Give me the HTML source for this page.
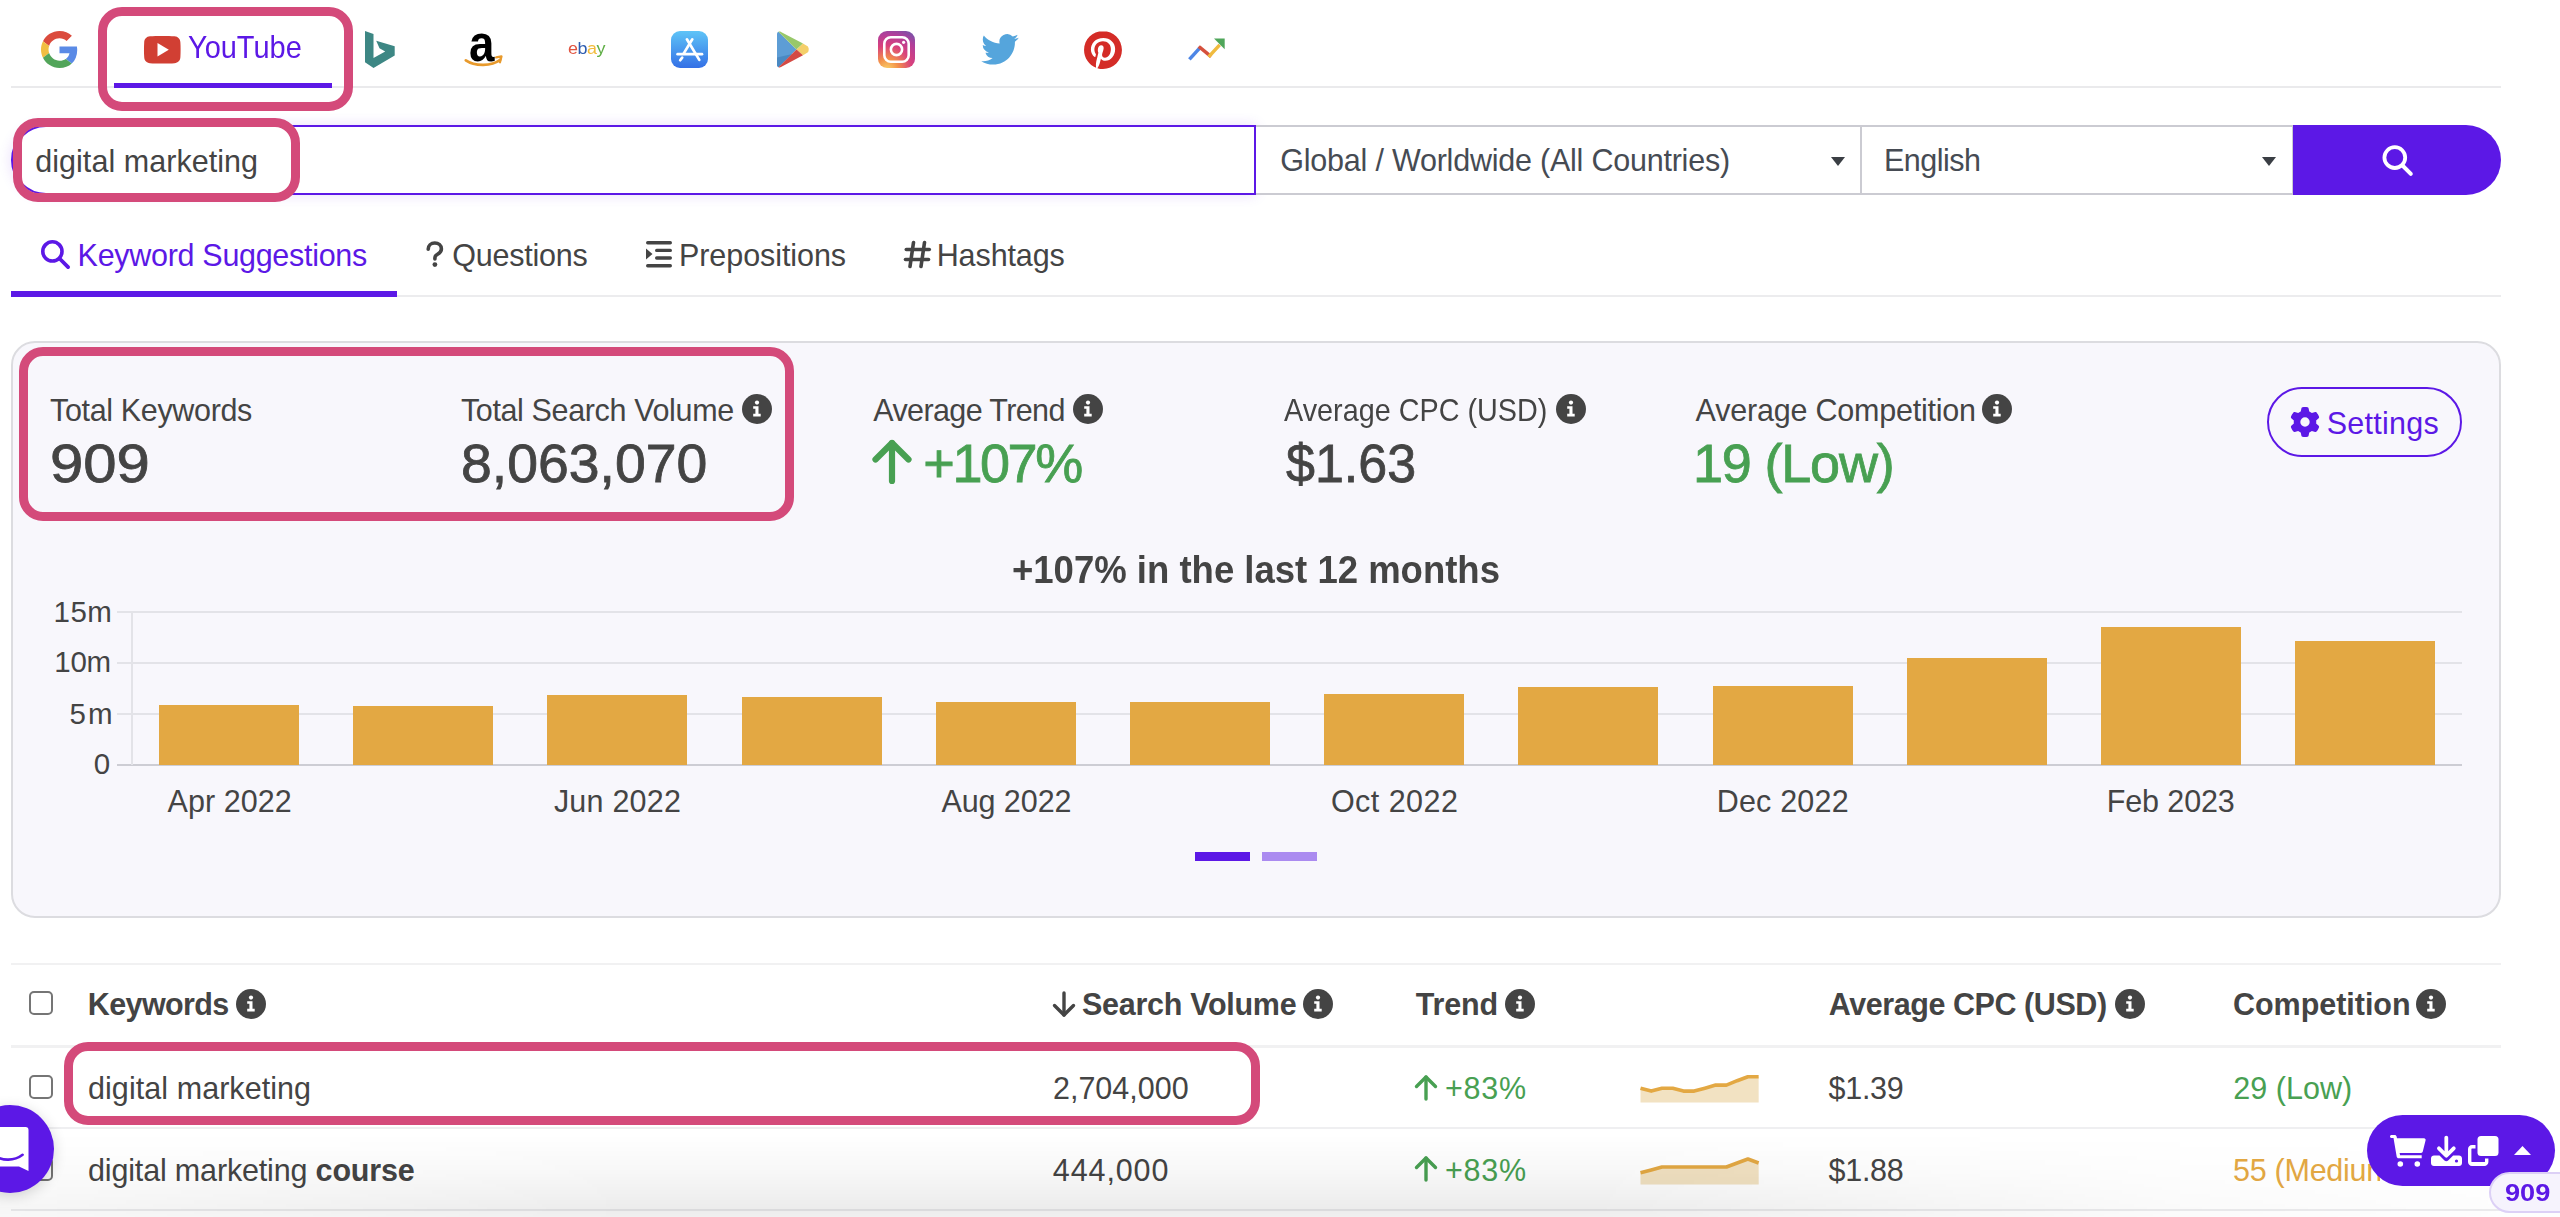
<!DOCTYPE html>
<html><head><meta charset="utf-8"><style>
html,body{margin:0;padding:0;width:2560px;height:1217px;overflow:hidden;background:#fff}
body{position:relative;font-family:"Liberation Sans",sans-serif;}
.a{position:absolute}
.t{position:absolute;white-space:nowrap;line-height:1}
svg.a{overflow:visible}
</style></head><body>
<svg class="a" style="left:41px;top:31px;" width="37" height="37" viewBox="0 0 48 48"><path fill="#db4b3d" d="M24 9.5c3.54 0 6.71 1.22 9.21 3.6l6.85-6.85C35.9 2.38 30.47 0 24 0 14.62 0 6.51 5.38 2.56 13.22l7.98 6.19C12.43 13.72 17.74 9.5 24 9.5z"/><path fill="#5a8ae6" d="M46.98 24.55c0-1.57-.15-3.09-.38-4.55H24v9.02h12.94c-.58 2.96-2.26 5.48-4.78 7.18l7.73 6c4.51-4.18 7.09-10.36 7.09-17.65z"/><path fill="#f1be42" d="M10.53 28.59c-.48-1.45-.76-2.99-.76-4.59s.27-3.14.76-4.59l-7.98-6.19C.92 16.46 0 20.12 0 24c0 3.88.92 7.54 2.56 10.78l7.97-6.19z"/><path fill="#52a55a" d="M24 48c6.48 0 11.93-2.13 15.89-5.81l-7.73-6c-2.15 1.45-4.92 2.3-8.16 2.3-6.26 0-11.57-4.22-13.47-9.91l-7.98 6.19C6.51 42.62 14.62 48 24 48z"/></svg>
<svg class="a" style="left:144px;top:36px;" width="37" height="28" viewBox="0 0 37 28"><path d="M6 0.3C12 -0.1 24.5 -0.1 30.5 0.3C34 0.6 36.3 3 36.4 6.5C36.7 11 36.7 16.6 36.4 21.1C36.3 24.6 34 27 30.5 27.3C24.5 27.7 12 27.7 6 27.3C2.5 27 0.3 24.6 0.2 21.1C-0.1 16.6 -0.1 11 0.2 6.5C0.3 3 2.5 0.6 6 0.3Z" fill="#d13f33"/><path d="M13.5 6.9L24.8 13.7 13.5 20.5z" fill="#fff"/></svg>
<div class="t " style="left:188.05px;top:31.68px;font-size:30.5px;color:#5c18e6;font-weight:400;letter-spacing:0.000px;transform:scaleX(0.9492);transform-origin:0 0;">YouTube</div>
<div class="a" style="left:114px;top:83px;width:218px;height:5px;background:#5c18e6"></div>
<div class="a" style="left:11px;top:86px;width:2490px;height:2px;background:#eaeaec"></div>
<div class="a" style="left:114px;top:83px;width:218px;height:5px;background:#5c18e6"></div>
<svg class="a" style="left:365px;top:31px;" width="31" height="37" viewBox="0 0 31 37"><path fill="#3d8784" d="M0 0L8.5 3V26.9L20.2 20.5L14.5 17.2L11.2 9.8L29.7 15.2V24.6L8.5 37L0 31.2Z"/></svg>
<div class="t" style="left:468.5px;top:16.9px;font-size:52px;font-weight:700;color:#000;line-height:52px;transform:scaleX(0.88);transform-origin:0 0">a</div>
<svg class="a" style="left:464px;top:53px;" width="41" height="16" viewBox="0 0 41 16"><path d="M1.8 7.3C10 12.8 27 14 36.2 6.8" stroke="#e89a2c" stroke-width="2.7" fill="none" stroke-linecap="round"/><path d="M32.2 4.4L37.4 3.4L35.9 9.2" stroke="#e89a2c" stroke-width="2.4" fill="none" stroke-linecap="round" stroke-linejoin="round"/></svg>
<div class="t" style="left:567.5px;top:40.5px;font-size:16px;line-height:16px;letter-spacing:-0.4px;font-weight:400;transform:scaleX(1.12);transform-origin:0 0"><span style="color:#e0533f">e</span><span style="color:#2e5db0">b</span><span style="color:#f2bb3a">a</span><span style="color:#5fae45">y</span></div>
<svg class="a" style="left:671px;top:31px;" width="37" height="37" viewBox="0 0 37 37"><defs><linearGradient id="ga" x1="0" y1="0" x2="0" y2="1"><stop offset="0" stop-color="#5ec4f7"/><stop offset="1" stop-color="#3470e6"/></linearGradient></defs><rect width="37" height="37" rx="9" fill="url(#ga)"/><g stroke="#fff" stroke-width="2.7" stroke-linecap="round" fill="none"><path d="M15.9 8.3L28.3 28.9"/><path d="M21.3 8.3L12.6 22.6"/><path d="M6.6 23.2H31"/><path d="M11.2 26.6L9.2 29.2"/></g></svg>
<svg class="a" style="left:777px;top:31px;" width="32" height="37" viewBox="0 0 32 37"><path d="M1.5 0.8C0.6 1.2 0 2 0 3V34C0 35 .6 35.8 1.5 36.2L19.5 18.5Z" fill="#5d9dd5"/><path d="M0 26.5L15.3 23L1.5 36.2C.6 35.8 0 35 0 34Z" fill="#4a89c2"/><path d="M1.5 0.8C2.3 .4 3.2 .4 4 .9L26 12.6L19.5 18.5Z" fill="#98c86a"/><path d="M19.5 18.5L26 12.6L30.2 15C32.2 16.2 32.2 20.6 30.2 21.8L26 24.3Z" fill="#f4cf6a"/><path d="M1.5 36.2L19.5 18.5L26 24.3L4 36.1C3.2 36.6 2.3 36.6 1.5 36.2Z" fill="#d44a44"/></svg>
<svg class="a" style="left:878px;top:31px;" width="37" height="37" viewBox="0 0 37 37"><defs><radialGradient id="gi" cx="0.25" cy="1.05" r="1.2"><stop offset="0" stop-color="#f9d36a"/><stop offset="0.25" stop-color="#f3914a"/><stop offset="0.55" stop-color="#d9417c"/><stop offset="0.8" stop-color="#b33e9a"/><stop offset="1" stop-color="#7a52a8"/></radialGradient></defs><rect width="37" height="37" rx="9" fill="url(#gi)"/><rect x="6.3" y="6.3" width="24.4" height="24.4" rx="6.5" fill="none" stroke="#fff" stroke-width="2.6"/><circle cx="18.5" cy="18.5" r="5.6" fill="none" stroke="#fff" stroke-width="2.6"/><circle cx="25.6" cy="11.3" r="1.6" fill="#fff"/></svg>
<svg class="a" style="left:981px;top:33px;" width="38" height="32" viewBox="0 1.5 24 20.5"><path fill="#55a5dc" d="M23.953 4.57a10 10 0 01-2.825.775 4.958 4.958 0 002.163-2.723c-.951.555-2.005.959-3.127 1.184a4.92 4.92 0 00-8.384 4.482C7.69 8.095 4.067 6.13 1.64 3.162a4.822 4.822 0 00-.666 2.475c0 1.71.87 3.213 2.188 4.096a4.904 4.904 0 01-2.228-.616v.06a4.923 4.923 0 003.946 4.827 4.996 4.996 0 01-2.212.085 4.936 4.936 0 004.604 3.417 9.867 9.867 0 01-6.102 2.105c-.39 0-.779-.023-1.17-.067a13.995 13.995 0 007.557 2.209c9.053 0 13.998-7.496 13.998-13.985 0-.21 0-.42-.015-.63A9.935 9.935 0 0024 4.59z"/></svg>
<svg class="a" style="left:1084px;top:31px;" width="38" height="38" viewBox="0 0 24 24"><circle cx="12" cy="12" r="12" fill="#fff"/><path fill="#d42c27" d="M12.017 0C5.396 0 .029 5.367.029 11.987c0 5.079 3.158 9.417 7.618 11.162-.105-.949-.199-2.403.041-3.439.219-.937 1.406-5.957 1.406-5.957s-.359-.72-.359-1.781c0-1.663.967-2.911 2.168-2.911 1.024 0 1.518.769 1.518 1.688 0 1.029-.653 2.567-.992 3.992-.285 1.193.6 2.165 1.775 2.165 2.128 0 3.768-2.245 3.768-5.487 0-2.861-2.063-4.869-5.008-4.869-3.41 0-5.409 2.562-5.409 5.199 0 1.033.394 2.143.889 2.741.099.12.112.225.085.345-.09.375-.293 1.199-.334 1.363-.053.225-.172.271-.401.165-1.495-.69-2.433-2.878-2.433-4.646 0-3.776 2.748-7.252 7.92-7.252 4.158 0 7.392 2.967 7.392 6.923 0 4.135-2.607 7.462-6.233 7.462-1.214 0-2.354-.629-2.758-1.379l-.749 2.848c-.269 1.045-1.004 2.352-1.498 3.146 1.123.345 2.306.535 3.55.535 6.607 0 11.985-5.365 11.985-11.987C23.97 5.39 18.592.026 11.985.026L12.017 0z"/></svg>
<svg class="a" style="left:1187px;top:38px;" width="39" height="23" viewBox="0 0 39 23"><g stroke-width="3.5" fill="none"><path d="M2.4 21.4L13.1 9.6" stroke="#4d86e6"/><path d="M13.1 9.6L22.8 17.6" stroke="#d5503c" stroke-linecap="square"/><path d="M22.8 17.6L31.5 8.2" stroke="#f0bb3f" stroke-linecap="square"/></g><path d="M27 0.4H37.7V11.2z" fill="#4fa65a"/></svg>
<div class="a" style="left:11px;top:125px;width:1245px;height:70px;border:2px solid #5c18e6;border-right-width:2px;border-radius:35px 0 0 35px;background:#fff;box-sizing:border-box;box-shadow:0 0 14px rgba(92,24,230,.14)"></div>
<div class="t " style="left:35.20px;top:145.68px;font-size:30.5px;color:#444444;font-weight:400;letter-spacing:0.050px;">digital marketing</div>
<div class="a" style="left:1256px;top:125px;width:606px;height:70px;border:2px solid #cbcbd2;border-left:none;box-sizing:border-box;background:#fff"></div>
<div class="a" style="left:1860px;top:125px;width:434px;height:70px;border:2px solid #cbcbd2;box-sizing:border-box;background:#fff"></div>
<div class="t " style="left:1280.30px;top:145.48px;font-size:30.5px;color:#464b53;font-weight:400;letter-spacing:-0.221px;">Global / Worldwide (All Countries)</div>
<div class="t " style="left:1884.00px;top:145.48px;font-size:30.5px;color:#464b53;font-weight:400;letter-spacing:-0.500px;">English</div>
<svg class="a" style="left:1831px;top:157px;" width="14" height="9" viewBox="0 0 14 9"><path d="M0 0h14L7 9z" fill="#3a3e44"/></svg>
<svg class="a" style="left:2262px;top:157px;" width="14" height="9" viewBox="0 0 14 9"><path d="M0 0h14L7 9z" fill="#3a3e44"/></svg>
<div class="a" style="left:2293px;top:125px;width:208px;height:70px;background:#5c18e6;border-radius:0 35px 35px 0"></div>
<svg class="a" style="left:2380px;top:143px;" width="34" height="34" viewBox="0 0 34 34"><circle cx="14.8" cy="14.6" r="10.4" stroke="#fff" stroke-width="3.8" fill="none"/><path d="M22.5 22.5l8.3 8.3" stroke="#fff" stroke-width="4" stroke-linecap="round"/></svg>
<svg class="a" style="left:40px;top:239px;" width="31" height="31" viewBox="0 0 31 31"><circle cx="12.4" cy="12.4" r="9.6" stroke="#5c18e6" stroke-width="3.6" fill="none"/><path d="M19.5 19.5l8.6 8.6" stroke="#5c18e6" stroke-width="3.8" stroke-linecap="round"/></svg>
<div class="t " style="left:77.60px;top:239.78px;font-size:30.5px;color:#5c18e6;font-weight:400;letter-spacing:-0.300px;">Keyword Suggestions</div>
<svg class="a" style="left:425px;top:241px;" width="20" height="27" viewBox="0 0 20 27"><path d="M3.2 8.2C3.2 4.6 6 2 9.8 2c3.7 0 6.6 2.5 6.6 6 0 3.3-2.6 4.6-4.6 5.8-1.4.8-1.9 1.7-1.9 3.2v.9" stroke="#444" stroke-width="3.6" fill="none" stroke-linecap="round"/><circle cx="9.9" cy="23.6" r="2.4" fill="#444"/></svg>
<div class="t " style="left:452.30px;top:239.78px;font-size:30.5px;color:#444444;font-weight:400;letter-spacing:-0.225px;">Questions</div>
<svg class="a" style="left:646px;top:241px;" width="27" height="27" viewBox="0 0 27 27"><g fill="#444"><rect x="0" y="0" width="26" height="3.4" rx="1.7"/><rect x="9" y="7.7" width="17" height="3.4" rx="1.7"/><rect x="9" y="15.3" width="17" height="3.4" rx="1.7"/><rect x="0" y="23" width="26" height="3.4" rx="1.7"/><path d="M0 7.5l6.5 5.5L0 18.5z"/></g></svg>
<div class="t " style="left:679.00px;top:239.78px;font-size:30.5px;color:#444444;font-weight:400;letter-spacing:-0.073px;">Prepositions</div>
<svg class="a" style="left:904px;top:241px;" width="27" height="27" viewBox="0 0 27 27"><g stroke="#444" stroke-width="3.6" stroke-linecap="round"><path d="M9.5 1.5l-3.5 24"/><path d="M20.5 1.5l-3.5 24"/><path d="M2.3 8.5h23"/><path d="M1.5 18.5h23"/></g></svg>
<div class="t " style="left:936.70px;top:239.78px;font-size:30.5px;color:#444444;font-weight:400;letter-spacing:-0.100px;">Hashtags</div>
<div class="a" style="left:11px;top:295px;width:2490px;height:2px;background:#ececee"></div>
<div class="a" style="left:11px;top:291px;width:386px;height:6px;background:#5c18e6"></div>
<div class="a" style="left:11px;top:341px;width:2490px;height:577px;background:#f8f7fc;border:2px solid #dcdce0;border-radius:24px;box-sizing:border-box"></div>
<div class="t " style="left:50.00px;top:394.58px;font-size:30.5px;color:#444444;font-weight:400;letter-spacing:-0.346px;">Total Keywords</div>
<div class="t " style="left:50.08px;top:435.79px;font-size:54px;color:#444444;font-weight:400;letter-spacing:0.000px;transform:scaleX(1.1081);transform-origin:0 0;-webkit-text-stroke:0.8px currentColor;">909</div>
<div class="t " style="left:460.90px;top:394.58px;font-size:30.5px;color:#444444;font-weight:400;letter-spacing:-0.361px;">Total Search Volume</div>
<svg class="a" style="left:742px;top:394px;" width="30" height="30" viewBox="0 0 30 30"><circle cx="15" cy="15" r="15" fill="#444"/><circle cx="15" cy="8.6" r="2.1" fill="#fff"/><path d="M11.2 12.2h5.3v7.6h2.2v2.6h-7.5v-2.6h2.2v-5h-2.2z" fill="#fff"/></svg>
<div class="t " style="left:461.35px;top:435.79px;font-size:54px;color:#444444;font-weight:400;letter-spacing:0.000px;transform:scaleX(1.0253);transform-origin:0 0;-webkit-text-stroke:0.8px currentColor;">8,063,070</div>
<div class="t " style="left:873.30px;top:394.58px;font-size:30.5px;color:#444444;font-weight:400;letter-spacing:-0.617px;">Average Trend</div>
<svg class="a" style="left:1073px;top:394px;" width="30" height="30" viewBox="0 0 30 30"><circle cx="15" cy="15" r="15" fill="#444"/><circle cx="15" cy="8.6" r="2.1" fill="#fff"/><path d="M11.2 12.2h5.3v7.6h2.2v2.6h-7.5v-2.6h2.2v-5h-2.2z" fill="#fff"/></svg>
<svg class="a" style="left:872px;top:439px;" width="40" height="46" viewBox="0 0 40 46"><g stroke="#48a052" stroke-width="6.2" stroke-linecap="round" stroke-linejoin="round" fill="none"><path d="M20 4v38"/><path d="M3.5 20.5L20 4l16.5 16.5"/></g></svg>
<div class="t " style="left:923.30px;top:435.79px;font-size:54px;color:#48a052;font-weight:400;letter-spacing:-2.425px;-webkit-text-stroke:0.8px currentColor;">+107%</div>
<div class="t " style="left:1284.40px;top:394.58px;font-size:30.5px;color:#444444;font-weight:400;letter-spacing:0.000px;transform:scaleX(0.9437);transform-origin:0 0;">Average CPC (USD)</div>
<svg class="a" style="left:1556px;top:394px;" width="30" height="30" viewBox="0 0 30 30"><circle cx="15" cy="15" r="15" fill="#444"/><circle cx="15" cy="8.6" r="2.1" fill="#fff"/><path d="M11.2 12.2h5.3v7.6h2.2v2.6h-7.5v-2.6h2.2v-5h-2.2z" fill="#fff"/></svg>
<div class="t " style="left:1286.40px;top:435.79px;font-size:54px;color:#444444;font-weight:400;letter-spacing:0.000px;transform:scaleX(0.9632);transform-origin:0 0;-webkit-text-stroke:0.8px currentColor;">$1.63</div>
<div class="t " style="left:1695.60px;top:394.58px;font-size:30.5px;color:#444444;font-weight:400;letter-spacing:-0.214px;">Average Competition</div>
<svg class="a" style="left:1982px;top:394px;" width="30" height="30" viewBox="0 0 30 30"><circle cx="15" cy="15" r="15" fill="#444"/><circle cx="15" cy="8.6" r="2.1" fill="#fff"/><path d="M11.2 12.2h5.3v7.6h2.2v2.6h-7.5v-2.6h2.2v-5h-2.2z" fill="#fff"/></svg>
<div class="t " style="left:1692.90px;top:435.79px;font-size:54px;color:#48a052;font-weight:400;letter-spacing:-1.171px;-webkit-text-stroke:0.8px currentColor;">19 (Low)</div>
<div class="a" style="left:2267px;top:387px;width:195px;height:70px;border:2px solid #5c18e6;border-radius:35px;box-sizing:border-box"></div>
<svg class="a" style="left:2290px;top:407px;" width="30" height="30" viewBox="0 0 512 512"><path fill="#5c18e6" d="M495.9 166.6c3.2 8.7.5 18.4-6.4 24.6l-43.3 39.4c1.1 8.3 1.7 16.8 1.7 25.4s-.6 17.1-1.7 25.4l43.3 39.4c6.9 6.2 9.6 15.9 6.4 24.6-4.4 11.9-9.7 23.3-15.8 34.3l-4.7 8.1c-6.6 11-14 21.4-22.1 31.2-5.9 7.2-15.7 9.6-24.5 6.8l-55.7-17.7c-13.4 10.3-28.2 18.9-44 25.4l-12.5 57.1c-2 9.1-9 16.3-18.2 17.8-13.8 2.3-28 3.5-42.5 3.5s-28.7-1.2-42.5-3.5c-9.2-1.5-16.2-8.7-18.2-17.8l-12.5-57.1c-15.8-6.5-30.6-15.1-44-25.4L83.1 425.900c-8.8 2.8-18.6.3-24.5-6.8-8.1-9.8-15.5-20.2-22.1-31.2l-4.7-8.1c-6.1-11-11.4-22.4-15.8-34.3-3.2-8.7-.5-18.4 6.4-24.6l43.300-39.400C64.6 273.1 64 264.6 64 256s.6-17.1 1.7-25.4L22.4 191.200c-6.9-6.200-9.600-15.900-6.400-24.600 4.400-11.900 9.700-23.300 15.800-34.300l4.700-8.100c6.600-11 14-21.400 22.100-31.200 5.900-7.200 15.700-9.600 24.500-6.800l55.700 17.700c13.400-10.300 28.200-18.900 44-25.400l12.500-57.100c2-9.100 9-16.300 18.200-17.800C227.300 1.200 241.500 0 256 0s28.700 1.200 42.500 3.500c9.200 1.500 16.200 8.700 18.200 17.800l12.500 57.100c15.800 6.500 30.600 15.100 44 25.400l55.700-17.700c8.800-2.800 18.600-.3 24.500 6.800 8.100 9.800 15.500 20.200 22.100 31.200l4.700 8.100c6.100 11 11.400 22.400 15.800 34.300zM256 336a80 80 0 1 0 0-160 80 80 0 1 0 0 160z"/></svg>
<div class="t " style="left:2326.75px;top:407.68px;font-size:30.5px;color:#5c18e6;font-weight:400;letter-spacing:0.250px;">Settings</div>
<div class="t " style="left:1011.93px;top:550.29px;font-size:39px;color:#444444;font-weight:700;letter-spacing:0.000px;transform:scaleX(0.9361);transform-origin:0 0;">+107% in the last 12 months</div>
<div class="a" style="left:117px;top:611px;width:2345px;height:2px;background:#e3e3e8"></div>
<div class="a" style="left:117px;top:662px;width:2345px;height:2px;background:#e3e3e8"></div>
<div class="a" style="left:117px;top:713px;width:2345px;height:2px;background:#e3e3e8"></div>
<div class="a" style="left:117px;top:764px;width:2345px;height:2px;background:#cdcdd4"></div>
<div class="a" style="left:131px;top:611px;width:2px;height:154px;background:#e3e3e8"></div>
<div class="t " style="left:53.60px;top:596.63px;font-size:29.5px;color:#444444;font-weight:400;letter-spacing:0.450px;">15m</div>
<div class="t " style="left:54.20px;top:646.83px;font-size:29.5px;color:#444444;font-weight:400;letter-spacing:-0.200px;">10m</div>
<div class="t " style="left:69.40px;top:698.53px;font-size:29.5px;color:#444444;font-weight:400;letter-spacing:2.100px;">5m</div>
<div class="t " style="left:93.70px;top:749.43px;font-size:29.5px;color:#444444;font-weight:400;letter-spacing:0.000px;">0</div>
<div class="a" style="left:159.0px;top:704.5px;width:140px;height:60.5px;background:#e3a843"></div>
<div class="a" style="left:353.2px;top:705.5px;width:140px;height:59.5px;background:#e3a843"></div>
<div class="a" style="left:547.4px;top:695px;width:140px;height:70px;background:#e3a843"></div>
<div class="a" style="left:741.6px;top:696.5px;width:140px;height:68.5px;background:#e3a843"></div>
<div class="a" style="left:935.8px;top:701.5px;width:140px;height:63.5px;background:#e3a843"></div>
<div class="a" style="left:1130.0px;top:701.5px;width:140px;height:63.5px;background:#e3a843"></div>
<div class="a" style="left:1324.2px;top:694px;width:140px;height:71px;background:#e3a843"></div>
<div class="a" style="left:1518.4px;top:686.5px;width:140px;height:78.5px;background:#e3a843"></div>
<div class="a" style="left:1712.6px;top:686px;width:140px;height:79px;background:#e3a843"></div>
<div class="a" style="left:1906.8px;top:657.5px;width:140px;height:107.5px;background:#e3a843"></div>
<div class="a" style="left:2101.0px;top:627px;width:140px;height:138px;background:#e3a843"></div>
<div class="a" style="left:2295.2px;top:640.5px;width:140px;height:124.5px;background:#e3a843"></div>
<div class="t " style="left:167.50px;top:786.48px;font-size:30.5px;color:#444444;font-weight:400;letter-spacing:0.071px;">Apr 2022</div>
<div class="t " style="left:553.90px;top:786.48px;font-size:30.5px;color:#444444;font-weight:400;letter-spacing:0.214px;">Jun 2022</div>
<div class="t " style="left:941.40px;top:786.48px;font-size:30.5px;color:#444444;font-weight:400;letter-spacing:-0.071px;">Aug 2022</div>
<div class="t " style="left:1330.90px;top:786.48px;font-size:30.5px;color:#444444;font-weight:400;letter-spacing:0.457px;">Oct 2022</div>
<div class="t " style="left:1716.70px;top:786.48px;font-size:30.5px;color:#444444;font-weight:400;letter-spacing:0.200px;">Dec 2022</div>
<div class="t " style="left:2106.75px;top:786.48px;font-size:30.5px;color:#444444;font-weight:400;letter-spacing:-0.121px;">Feb 2023</div>
<div class="a" style="left:1195px;top:852px;width:55px;height:9px;background:#5c18e6"></div>
<div class="a" style="left:1262px;top:852px;width:55px;height:9px;background:#ab8bf0"></div>
<div class="a" style="left:11px;top:963px;width:2490px;height:2px;background:#f1f1f2"></div>
<div class="a" style="left:29px;top:991px;width:24px;height:24px;border:2px solid #757575;border-radius:5px;box-sizing:border-box;background:#fff"></div>
<div class="t " style="left:87.75px;top:989.18px;font-size:30.5px;color:#444444;font-weight:700;letter-spacing:-0.607px;">Keywords</div>
<svg class="a" style="left:236px;top:989px;" width="30" height="30" viewBox="0 0 30 30"><circle cx="15" cy="15" r="15" fill="#444"/><circle cx="15" cy="8.6" r="2.1" fill="#fff"/><path d="M11.2 12.2h5.3v7.6h2.2v2.6h-7.5v-2.6h2.2v-5h-2.2z" fill="#fff"/></svg>
<svg class="a" style="left:1052px;top:991px;" width="24" height="27" viewBox="0 0 24 27"><g stroke="#444" stroke-width="3.4" stroke-linecap="round" stroke-linejoin="round" fill="none"><path d="M12 2v22"/><path d="M2.5 14.5L12 24l9.5-9.5"/></g></svg>
<div class="t " style="left:1082.00px;top:989.18px;font-size:30.5px;color:#444444;font-weight:700;letter-spacing:-0.292px;">Search Volume</div>
<svg class="a" style="left:1303px;top:989px;" width="30" height="30" viewBox="0 0 30 30"><circle cx="15" cy="15" r="15" fill="#444"/><circle cx="15" cy="8.6" r="2.1" fill="#fff"/><path d="M11.2 12.2h5.3v7.6h2.2v2.6h-7.5v-2.6h2.2v-5h-2.2z" fill="#fff"/></svg>
<div class="t " style="left:1415.80px;top:989.18px;font-size:30.5px;color:#444444;font-weight:700;letter-spacing:-0.200px;">Trend</div>
<svg class="a" style="left:1505px;top:989px;" width="30" height="30" viewBox="0 0 30 30"><circle cx="15" cy="15" r="15" fill="#444"/><circle cx="15" cy="8.6" r="2.1" fill="#fff"/><path d="M11.2 12.2h5.3v7.6h2.2v2.6h-7.5v-2.6h2.2v-5h-2.2z" fill="#fff"/></svg>
<div class="t " style="left:1828.70px;top:989.18px;font-size:30.5px;color:#444444;font-weight:700;letter-spacing:-0.431px;">Average CPC (USD)</div>
<svg class="a" style="left:2115px;top:989px;" width="30" height="30" viewBox="0 0 30 30"><circle cx="15" cy="15" r="15" fill="#444"/><circle cx="15" cy="8.6" r="2.1" fill="#fff"/><path d="M11.2 12.2h5.3v7.6h2.2v2.6h-7.5v-2.6h2.2v-5h-2.2z" fill="#fff"/></svg>
<div class="t " style="left:2233.00px;top:989.18px;font-size:30.5px;color:#444444;font-weight:700;letter-spacing:-0.030px;">Competition</div>
<svg class="a" style="left:2416px;top:989px;" width="30" height="30" viewBox="0 0 30 30"><circle cx="15" cy="15" r="15" fill="#444"/><circle cx="15" cy="8.6" r="2.1" fill="#fff"/><path d="M11.2 12.2h5.3v7.6h2.2v2.6h-7.5v-2.6h2.2v-5h-2.2z" fill="#fff"/></svg>
<div class="a" style="left:11px;top:1045px;width:2490px;height:3px;background:#f1f1f2"></div>
<div class="a" style="left:29px;top:1075px;width:24px;height:24px;border:2px solid #757575;border-radius:5px;box-sizing:border-box;background:#fff"></div>
<div class="t " style="left:88.00px;top:1073.28px;font-size:30.5px;color:#444444;font-weight:400;letter-spacing:0.062px;">digital marketing</div>
<div class="t " style="left:1053.00px;top:1073.28px;font-size:30.5px;color:#444444;font-weight:400;letter-spacing:-0.012px;">2,704,000</div>
<svg class="a" style="left:1414px;top:1074px;" width="24" height="27" viewBox="0 0 24 27"><g stroke="#48a052" stroke-width="3.4" stroke-linecap="round" stroke-linejoin="round" fill="none"><path d="M12 25V3"/><path d="M2.5 12.5L12 3l9.5 9.5"/></g></svg>
<div class="t " style="left:1445.00px;top:1073.28px;font-size:30.5px;color:#48a052;font-weight:400;letter-spacing:0.733px;">+83%</div>
<div class="t " style="left:1828.50px;top:1073.28px;font-size:30.5px;color:#444444;font-weight:400;letter-spacing:-0.275px;">$1.39</div>
<div class="t " style="left:2233.30px;top:1073.28px;font-size:30.5px;color:#48a052;font-weight:400;letter-spacing:0.029px;">29 (Low)</div>
<div class="a" style="left:11px;top:1127px;width:2490px;height:2px;background:#efeff1"></div>
<div class="a" style="left:29px;top:1157px;width:24px;height:24px;border:2px solid #757575;border-radius:5px;box-sizing:border-box;background:#fff"></div>
<div class="t " style="left:88.00px;top:1154.58px;font-size:30.5px;color:#444444;font-weight:400;letter-spacing:-0.165px;">digital marketing <b style="font-weight:700">course</b></div>
<div class="t " style="left:1052.80px;top:1154.58px;font-size:30.5px;color:#444444;font-weight:400;letter-spacing:0.900px;">444,000</div>
<svg class="a" style="left:1414px;top:1155px;" width="24" height="27" viewBox="0 0 24 27"><g stroke="#48a052" stroke-width="3.4" stroke-linecap="round" stroke-linejoin="round" fill="none"><path d="M12 25V3"/><path d="M2.5 12.5L12 3l9.5 9.5"/></g></svg>
<div class="t " style="left:1445.00px;top:1154.58px;font-size:30.5px;color:#48a052;font-weight:400;letter-spacing:0.733px;">+83%</div>
<div class="t " style="left:1828.50px;top:1154.58px;font-size:30.5px;color:#444444;font-weight:400;letter-spacing:-0.275px;">$1.88</div>
<div class="a" style="left:2225px;top:1145px;width:155px;height:60px;overflow:hidden">
<div class="t " style="left:8.00px;top:9.58px;font-size:30.5px;color:#e3a843;font-weight:400;letter-spacing:-0.260px;">55 (Medium)</div>
</div>
<div class="a" style="left:11px;top:1209px;width:2490px;height:2px;background:#ececee"></div>
<svg class="a" style="left:1640px;top:1070px;" width="120" height="33.59999999999991" viewBox="0 0 120 33.59999999999991"><path d="M0.5,32.59999999999991 L0.50,18.20 L11.24,21.10 L21.98,18.20 L32.72,18.20 L43.46,21.10 L54.20,21.10 L64.94,18.20 L75.68,15.10 L86.42,15.10 L97.16,10.70 L107.90,6.70 L118.64,6.70 L118.7,32.59999999999991 Z" fill="#f2e2c2"/><polyline points="0.50,18.20 11.24,21.10 21.98,18.20 32.72,18.20 43.46,21.10 54.20,21.10 64.94,18.20 75.68,15.10 86.42,15.10 97.16,10.70 107.90,6.70 118.64,6.70" fill="none" stroke="#e3a843" stroke-width="3.6" stroke-linejoin="round"/></svg>
<svg class="a" style="left:1640px;top:1150px;" width="120" height="35.5" viewBox="0 0 120 35.5"><path d="M0.5,34.5 L0.50,22.80 L11.24,19.90 L21.98,17.00 L32.72,17.00 L43.46,17.00 L54.20,17.00 L64.94,17.00 L75.68,17.00 L86.42,17.00 L97.16,13.00 L107.90,9.00 L118.64,13.00 L118.7,34.5 Z" fill="#f2e2c2"/><polyline points="0.50,22.80 11.24,19.90 21.98,17.00 32.72,17.00 43.46,17.00 54.20,17.00 64.94,17.00 75.68,17.00 86.42,17.00 97.16,13.00 107.90,9.00 118.64,13.00" fill="none" stroke="#e3a843" stroke-width="3.6" stroke-linejoin="round"/></svg>
<div class="a" style="left:64px;top:1042px;width:1196px;height:83px;border:9px solid #d44a7a;border-radius:24px;box-sizing:border-box"></div>
<div class="a" style="left:0px;top:1135px;width:2560px;height:82px;background:linear-gradient(to bottom, rgba(0,0,0,0) 0%, rgba(0,0,0,0.03) 45%, rgba(0,0,0,0.075) 90%, rgba(0,0,0,0.06) 100%);-webkit-mask-image:linear-gradient(to right, rgba(0,0,0,.45) 0%, #000 25%, #000 62%, rgba(0,0,0,.25) 85%, rgba(0,0,0,0.05) 100%)"></div>
<div class="a" style="left:-34px;top:1105px;width:88px;height:88px;border-radius:50%;background:#5c18e6;box-shadow:0 3px 14px rgba(0,0,0,.16)"></div>
<svg class="a" style="left:0px;top:1125px;" width="32" height="50" viewBox="0 0 32 50"><path d="M-20 2h45.5a3 3 0 0 1 3 3v41l-9.5-4.5H-20z" fill="#fff"/><path d="M-8 28.5C1 36.5 14 36.5 22.6 29.8" stroke="#5c18e6" stroke-width="2.6" fill="none" stroke-linecap="round"/></svg>
<div class="a" style="left:2367px;top:1115px;width:188px;height:71px;background:#5c18e6;border-radius:36px"></div>
<svg class="a" style="left:2390px;top:1135px;" width="36" height="32" viewBox="0 0 36 32"><g fill="#fff"><path d="M0 1.5C0 .7.7 0 1.5 0h3.2c.9 0 1.7.6 1.9 1.5l.4 1.7h27c1.1 0 1.9 1 1.6 2.1l-2.8 11.3c-.2.8-.9 1.3-1.7 1.3H9.6l.5 2.4h21.6v3H8.5c-.9 0-1.6-.6-1.8-1.5L3.5 3H1.5C.7 3 0 2.3 0 1.5z"/><circle cx="10.3" cy="29" r="2.8"/><circle cx="27.3" cy="29" r="2.8"/></g></svg>
<svg class="a" style="left:2431px;top:1136px;" width="31" height="30" viewBox="0 0 31 30"><g fill="#fff"><path d="M13.4 1.6a1.9 1.9 0 0 1 3.8 0v13.6l4.2-4.2a1.9 1.9 0 0 1 2.7 2.7l-7.4 7.4a1.9 1.9 0 0 1-2.7 0l-7.4-7.4a1.9 1.9 0 0 1 2.7-2.7l4.2 4.2z"/><path d="M0 22.5c0-1.7 1.3-3 3-3h5.5l5 5c1 1 2.6 1 3.6 0l5-5H28c1.7 0 3 1.3 3 3V27c0 1.7-1.3 3-3 3H3c-1.7 0-3-1.3-3-3z"/></g><circle cx="25.5" cy="25" r="1.6" fill="#5c18e6"/></svg>
<svg class="a" style="left:2468px;top:1136px;" width="31" height="30" viewBox="0 0 31 30"><g fill="#fff"><rect x="9.5" y="0" width="21" height="20" rx="3.5"/><path d="M0 13c0-2.2 1.8-4 4-4h3.5v3.4H4a.6.6 0 0 0-.6.6v12.4c0 .3.3.6.6.6h12.4c.3 0 .6-.3.6-.6V22.5h3.4V26c0 2.2-1.8 4-4 4H4c-2.2 0-4-1.8-4-4z"/></g></svg>
<svg class="a" style="left:2514px;top:1146px;" width="17" height="9" viewBox="0 0 17 9"><path d="M0 9L8.5 0 17 9z" fill="#fff"/></svg>
<div class="a" style="left:2489px;top:1172px;width:90px;height:41px;background:#f6f3fd;border:2px solid #dcd0f6;border-radius:21px;box-sizing:border-box"></div>
<div class="t " style="left:2504.82px;top:1182.03px;font-size:23px;color:#5c18e6;font-weight:700;letter-spacing:0.000px;transform:scaleX(1.1811);transform-origin:0 0;">909</div>
<div class="a" style="left:98px;top:7px;width:255px;height:104px;border:9px solid #d44a7a;border-radius:24px;box-sizing:border-box"></div>
<div class="a" style="left:13px;top:118px;width:287px;height:84px;border:9px solid #d44a7a;border-radius:25px;box-sizing:border-box"></div>
<div class="a" style="left:19px;top:347px;width:775px;height:174px;border:9px solid #d44a7a;border-radius:24px;box-sizing:border-box"></div>
</body></html>
